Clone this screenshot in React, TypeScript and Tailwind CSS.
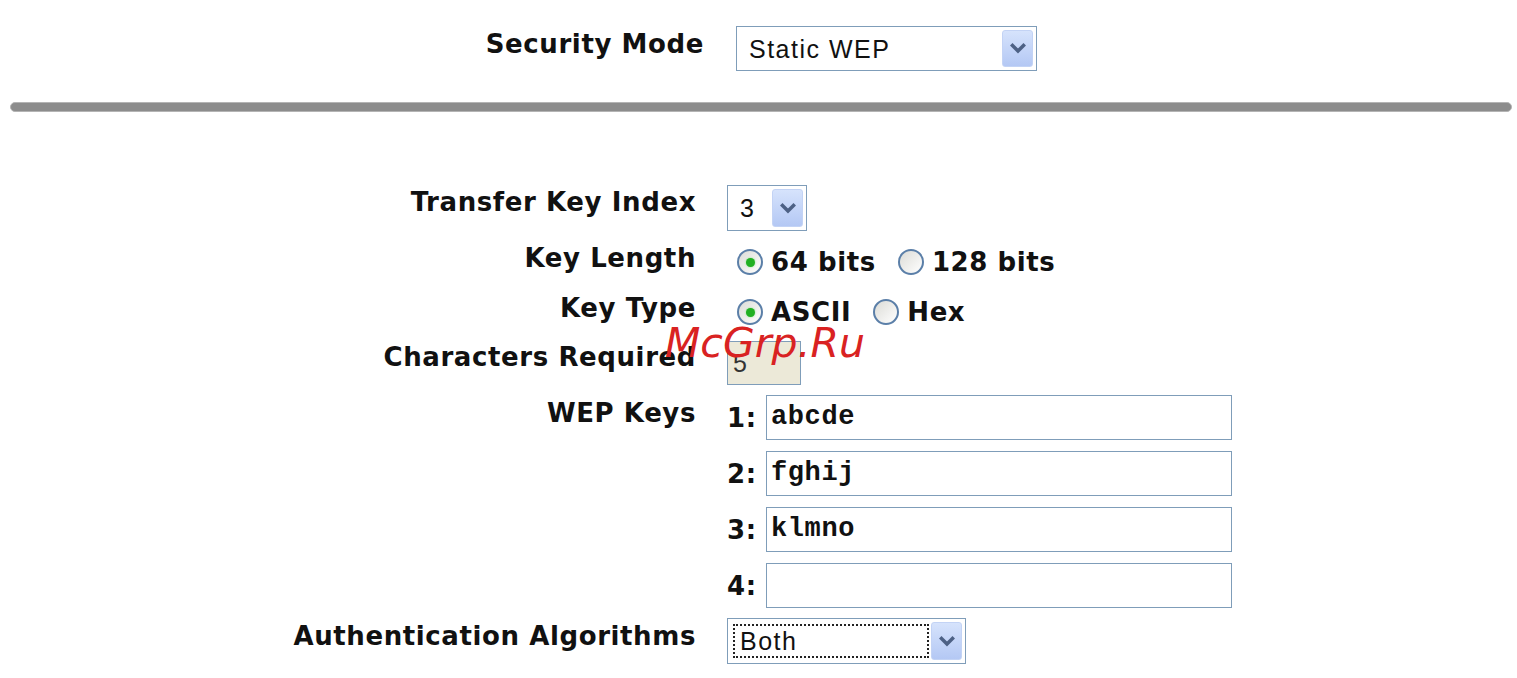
import React from 'react';

const label = "font-['DejaVu_Sans',sans-serif] text-[26px] font-bold leading-[28px] tracking-[0.6px] text-[#111]";
const plain = "font-['Liberation_Sans',Arial,sans-serif] text-[25px] leading-[28px] tracking-[1.5px] text-[#111]";

function Chevron() {
  return (
    <svg width="16" height="11" viewBox="0 0 16 11">
      <path d="M2.5 2.5 L8 8 L13.5 2.5" fill="none" stroke="#4d6185" strokeWidth="3.5" strokeLinecap="square" />
    </svg>
  );
}

function DropButton() {
  return (
    <div className="flex h-full w-[31px] items-center justify-center rounded-[3px] border border-[#c3d3f5] bg-gradient-to-b from-[#d6e3fc] to-[#b4c8f4]">
      <Chevron />
    </div>
  );
}

function Radio({ checked }: { checked?: boolean }) {
  return (
    <div className="flex h-[26px] w-[26px] items-center justify-center rounded-full border-2 border-[#5b7fa8] bg-gradient-to-br from-[#dcdcd7] to-white">
      {checked && <div className="h-[9px] w-[9px] rounded-full bg-[#22b022] shadow-[0_0_2px_#7ee07e]" />}
    </div>
  );
}

function RadioGroup({ options, checked }: { options: string[]; checked: number }) {
  return (
    <div className="flex h-[28px] items-center">
      {options.map((o, i) => (
        <div key={o} className="mr-[22px] flex items-center">
          <Radio checked={i === checked} />
          <span className={`ml-[8px] ${label}`}>{o}</span>
        </div>
      ))}
    </div>
  );
}

function KeyInput({ n, value }: { n: number; value: string }) {
  return (
    <div className="flex h-[56px] items-start pt-[5px]">
      <div className="flex h-[45px] items-center">
        <span className={`w-[39px] ${label}`}>{n}:</span>
        <div className="flex h-[45px] w-[466px] items-center border border-[#7f9db9] bg-white pl-[4px]">
          <span className="font-['Liberation_Mono',monospace] text-[27px] font-bold tracking-[0.6px] text-[#111]">{value}</span>
        </div>
      </div>
    </div>
  );
}

export default function App() {
  return (
    <div className="relative min-h-screen bg-white">
      <div className="flex pt-[26px]">
        <div className={`w-[704px] pt-[4px] text-right ${label}`}>Security Mode</div>
        <div className="ml-[32px] flex h-[45px] w-[301px] items-stretch border border-[#7f9db9] bg-white p-[3px]">
          <div className={`flex flex-1 items-center pl-[9px] ${plain}`}>Static WEP</div>
          <DropButton />
        </div>
      </div>

      <div className="ml-[10px] mr-[5px] mt-[31px] h-[10px] rounded-full border border-[#b4b4b4] bg-[#8c8c8c]" />

      <div className="mt-[73px] flex flex-col">
        <div className="flex h-[51px]">
          <div className={`w-[696px] pt-[3px] text-right ${label}`}>Transfer Key Index</div>
          <div className="ml-[31px] flex h-[46px] w-[80px] items-stretch border border-[#7f9db9] bg-white p-[3px]">
            <div className={`flex flex-1 items-center pl-[9px] ${plain}`}>3</div>
            <DropButton />
          </div>
        </div>

        <div className="flex h-[50px]">
          <div className={`w-[696px] pt-[8px] text-right ${label}`}>Key Length</div>
          <div className="ml-[41px] pt-[12px]">
            <RadioGroup options={['64 bits', '128 bits']} checked={0} />
          </div>
        </div>

        <div className="flex h-[50px]">
          <div className={`w-[696px] pt-[8px] text-right ${label}`}>Key Type</div>
          <div className="ml-[41px] pt-[12px]">
            <RadioGroup options={['ASCII', 'Hex']} checked={0} />
          </div>
        </div>

        <div className="flex h-[54px]">
          <div className={`w-[696px] pt-[7px] text-right ${label}`}>Characters Required</div>
          <div className="ml-[31px] pt-[5px]">
            <div className={`flex h-[44px] w-[74px] items-center border border-[#7f9db9] bg-[#ece9d8] pl-[5px] ${plain} text-[#333]`}>5</div>
          </div>
        </div>

        <div className="flex">
          <div className={`w-[696px] pt-[9px] text-right ${label}`}>WEP Keys</div>
          <div className="ml-[31px] flex flex-col">
            <KeyInput n={1} value="abcde" />
            <KeyInput n={2} value="fghij" />
            <KeyInput n={3} value="klmno" />
            <KeyInput n={4} value="" />
          </div>
        </div>

        <div className="flex h-[56px]">
          <div className={`w-[696px] pt-[8px] text-right ${label}`}>Authentication Algorithms</div>
          <div className="ml-[31px] pt-[4px]">
            <div className="flex h-[46px] w-[239px] items-stretch border border-[#7f9db9] bg-white p-[3px]">
              <div className="flex flex-1 items-center p-[2px]">
                <div className={`flex h-full w-full items-center border-2 border-dotted border-[#222] pl-[5px] ${plain}`}>Both</div>
              </div>
              <DropButton />
            </div>
          </div>
        </div>
      </div>

      <div className="absolute left-[665px] top-[319px] font-['DejaVu_Sans',sans-serif] text-[41px] italic leading-[48px] text-[#d92222]">
        McGrp.Ru
      </div>
    </div>
  );
}
